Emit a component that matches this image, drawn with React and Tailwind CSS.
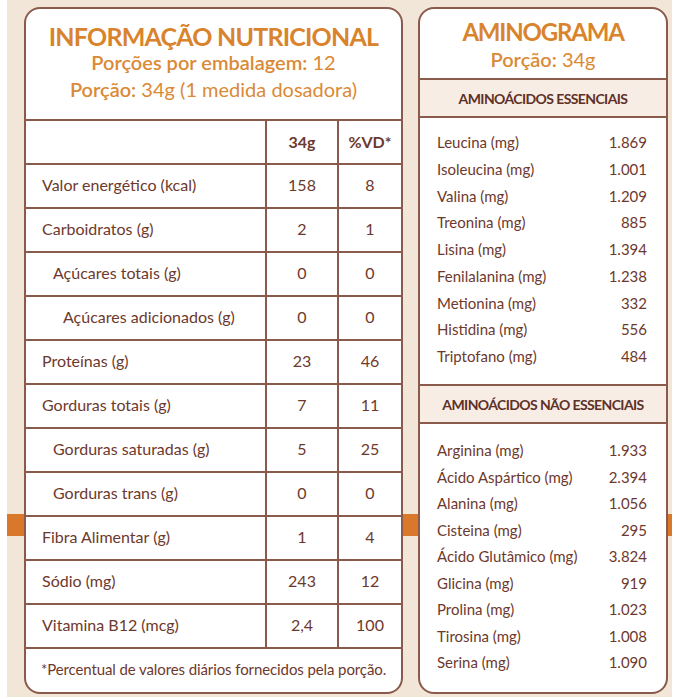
import React from "react";

const rows = [
  { label: "Valor energético (kcal)", a: "158", b: "8", indent: 0 },
  { label: "Carboidratos (g)", a: "2", b: "1", indent: 0 },
  { label: "Açúcares totais (g)", a: "0", b: "0", indent: 1 },
  { label: "Açúcares adicionados (g)", a: "0", b: "0", indent: 2 },
  { label: "Proteínas (g)", a: "23", b: "46", indent: 0 },
  { label: "Gorduras totais (g)", a: "7", b: "11", indent: 0 },
  { label: "Gorduras saturadas (g)", a: "5", b: "25", indent: 1 },
  { label: "Gorduras trans (g)", a: "0", b: "0", indent: 1 },
  { label: "Fibra Alimentar (g)", a: "1", b: "4", indent: 0 },
  { label: "Sódio (mg)", a: "243", b: "12", indent: 0 },
  { label: "Vitamina B12 (mcg)", a: "2,4", b: "100", indent: 0 },
];

const essenciais = [
  ["Leucina (mg)", "1.869"],
  ["Isoleucina (mg)", "1.001"],
  ["Valina (mg)", "1.209"],
  ["Treonina (mg)", "885"],
  ["Lisina (mg)", "1.394"],
  ["Fenilalanina (mg)", "1.238"],
  ["Metionina (mg)", "332"],
  ["Histidina (mg)", "556"],
  ["Triptofano (mg)", "484"],
];

const naoEssenciais = [
  ["Arginina (mg)", "1.933"],
  ["Ácido Aspártico (mg)", "2.394"],
  ["Alanina (mg)", "1.056"],
  ["Cisteina (mg)", "295"],
  ["Ácido Glutâmico (mg)", "3.824"],
  ["Glicina (mg)", "919"],
  ["Prolina (mg)", "1.023"],
  ["Tirosina (mg)", "1.008"],
  ["Serina (mg)", "1.090"],
];

const indentCls = ["pl-[16px]", "pl-[27px]", "pl-[37px]"];

export default function App() {
  return (
    <div
      className="w-[700px] h-[700px] bg-white overflow-hidden text-[#6d392d]"
      style={{ fontFamily: "Lato, 'Open Sans', sans-serif" }}
    >
      <div className="relative ml-[7px] w-[665px] h-[697px] bg-[#f1e6d7]">
        <div className="absolute left-0 right-0 top-[514px] h-[22px] bg-[#d9782a]" />
        <div className="relative flex gap-[15px] pl-[17px] pt-[7px]">
          {/* Left panel */}
          <div className="w-[379px] h-[687px] bg-white border-2 border-[#8a5a4c] rounded-[16px] overflow-hidden flex flex-col">
            <div className="h-[110px] flex flex-col items-center pt-[11px]">
              <div className="text-[25px] leading-[32px] font-bold tracking-[-0.8px] text-[#d9842c]">
                INFORMAÇÃO NUTRICIONAL
              </div>
              <div className="text-[20px] leading-[26px] mt-[-3px] text-[#da8a36]">
                <span className="font-semibold">Porções por embalagem:</span>{" "}
                <span className="font-normal">12</span>
              </div>
              <div className="text-[20px] leading-[26px] mt-[1px] text-[#da8a36]">
                <span className="font-semibold">Porção:</span>{" "}
                <span className="font-normal">34g (1 medida dosadora)</span>
              </div>
            </div>
            <div className="flex h-[44px] border-t-2 border-[#8a5a4c] text-[16px]">
              <div className="flex-1" />
              <div className="w-[72px] border-l-2 border-[#8a5a4c] flex items-center justify-center font-bold">
                34g
              </div>
              <div className="w-[64px] border-l-2 border-[#8a5a4c] flex items-center justify-center font-bold">
                %VD*
              </div>
            </div>
            {rows.map((r) => (
              <div
                key={r.label}
                className="flex h-[44px] border-t-2 border-[#8a5a4c] text-[16px]"
              >
                <div className={`flex-1 flex items-center pb-[2px] ${indentCls[r.indent]}`}>
                  {r.label}
                </div>
                <div className="w-[72px] border-l-2 border-[#8a5a4c] flex items-center justify-center pb-[2px]">
                  {r.a}
                </div>
                <div className="w-[64px] border-l-2 border-[#8a5a4c] flex items-center justify-center pb-[2px]">
                  {r.b}
                </div>
              </div>
            ))}
            <div className="flex-1 border-t-2 border-[#8a5a4c] flex items-center justify-center text-[15px] pb-[2px] tracking-[-0.1px]">
              *Percentual de valores diários fornecidos pela porção.
            </div>
          </div>

          {/* Right panel */}
          <div className="w-[250px] h-[687px] bg-white border-2 border-[#8a5a4c] rounded-[16px] overflow-hidden flex flex-col">
            <div className="h-[69px] flex flex-col items-center pt-[8px]">
              <div className="text-[24px] leading-[30px] font-bold tracking-[-1.2px] text-[#d9842c]">
                AMINOGRAMA
              </div>
              <div className="text-[20px] leading-[24px] text-[#da8a36]">
                <span className="font-semibold">Porção:</span>{" "}
                <span className="font-normal">34g</span>
              </div>
            </div>
            <div className="h-[40px] border-y-2 border-[#8a5a4c] bg-[#f8ede5] flex items-center justify-center text-[14px] font-bold tracking-[-0.6px] text-[#5e3026]">
              AMINOÁCIDOS ESSENCIAIS
            </div>
            <div className="flex flex-col pl-[17px] pr-[19px] pt-[11px] h-[266px]">
              {essenciais.map(([k, v]) => (
                <div key={k} className="flex justify-between items-center h-[26.75px] text-[15px]">
                  <span>{k}</span>
                  <span>{v}</span>
                </div>
              ))}
            </div>
            <div className="h-[40px] border-y-2 border-[#8a5a4c] bg-[#f8ede5] flex items-center justify-center text-[14px] font-bold tracking-[-0.6px] text-[#5e3026]">
              AMINOÁCIDOS NÃO ESSENCIAIS
            </div>
            <div className="flex flex-col pl-[17px] pr-[19px] pt-[13px]">
              {naoEssenciais.map(([k, v]) => (
                <div key={k} className="flex justify-between items-center h-[26.5px] text-[15px]">
                  <span>{k}</span>
                  <span>{v}</span>
                </div>
              ))}
            </div>
          </div>
        </div>
      </div>
    </div>
  );
}
